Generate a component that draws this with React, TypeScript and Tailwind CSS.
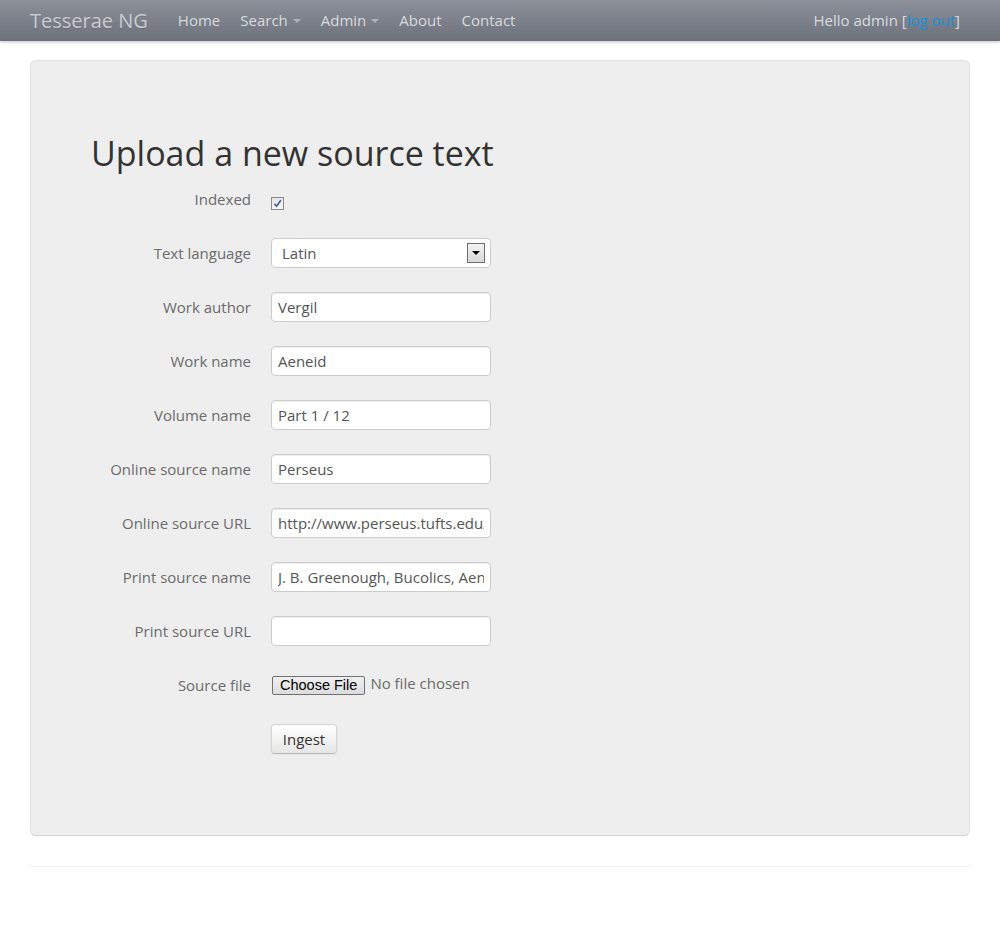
import React from "react";

const rows: { label: string; value?: string }[] = [
  { label: "Work author", value: "Vergil" },
  { label: "Work name", value: "Aeneid" },
  { label: "Volume name", value: "Part 1 / 12" },
  { label: "Online source name", value: "Perseus" },
  { label: "Online source URL", value: "http://www.perseus.tufts.edu/hopper/text?doc=Perseus:text:1999.02.0055" },
  { label: "Print source name", value: "J. B. Greenough, Bucolics, Aeneid, and Georgics of Vergil" },
  { label: "Print source URL", value: "" },
];

function Caret() {
  return <span className="ml-[5px] mt-[1px] inline-block h-0 w-0 border-x-[4px] border-t-[4px] border-x-transparent border-t-[#aeb2b9] align-middle" />;
}

function Label({ children }: { children: React.ReactNode }) {
  return <div className="w-[160px] shrink-0 pt-[5px] text-right text-[15px] leading-[20px] text-[#6b6b6b]">{children}</div>;
}

export default function App() {
  return (
    <div className="min-h-[930px] bg-white" style={{ fontFamily: '"Open Sans", "Noto Sans", sans-serif' }}>
      <div className="flex h-[41px] items-center bg-gradient-to-b from-[#8b9099] to-[#6c717b] px-[30px] shadow-[0_1px_3px_rgba(0,0,0,0.25)]">
        <div className="text-[20px] leading-[20px] text-[#c9ccd1] [text-shadow:0_1px_0_rgba(0,0,0,0.15)]">Tesserae NG</div>
        <div className="ml-[30px] flex items-center gap-[20px] text-[15px] text-[#d9dbde]">
          <span>Home</span>
          <span className="flex items-center">Search<Caret /></span>
          <span className="flex items-center">Admin<Caret /></span>
          <span>About</span>
          <span>Contact</span>
        </div>
        <div className="ml-auto pr-[10px] text-[15px] text-[#d9dbde]">
          Hello admin [<span className="text-[#1a8fd8]">log out</span>]
        </div>
      </div>

      <div className="px-[30px] pt-[19px]">
        <div className="h-[776px] rounded-[6px] border border-[#e0e0e0] border-b-[#d0d0d0] bg-[#eeeeee] px-[60px] pt-[59px]">
          <div className="h-[64px] pt-[14px]">
            <h1 className="text-[34px] leading-[38px] text-[#333]">Upload a new source text</h1>
          </div>

          <div className="flex h-[54px]">
            <Label>Indexed</Label>
            <div className="ml-[20px] pt-[13px]">
              <div className="flex h-[13px] w-[13px] items-center justify-center border border-[#8b8b8b] bg-gradient-to-b from-[#e6e6e6] to-[#f7f7f7]">
                <svg width="9" height="9" viewBox="0 0 9 9">
                  <path d="M1.5 4.8 L3.6 7.2 L7.8 1.2" fill="none" stroke="#3a5baa" strokeWidth="1.6" />
                </svg>
              </div>
            </div>
          </div>

          <div className="flex h-[54px]">
            <Label>Text language</Label>
            <div className="ml-[20px] flex h-[30px] w-[220px] items-center rounded-[4px] border border-[#cccccc] bg-white pl-[10px] pr-[5px] text-[15px] text-[#555]">
              <span>Latin</span>
              <div className="ml-auto flex h-[20px] w-[18px] items-center justify-center border border-[#6f6f6f] bg-gradient-to-b from-[#f4f4f4] to-[#d8d8d8]">
                <span className="inline-block h-0 w-0 border-x-[4px] border-t-[4px] border-x-transparent border-t-black" />
              </div>
            </div>
          </div>

          {rows.map((r) => (
            <div key={r.label} className="flex h-[54px]">
              <Label>{r.label}</Label>
              <input
                readOnly
                value={r.value}
                className="ml-[20px] h-[30px] w-[220px] rounded-[4px] border border-[#cccccc] bg-white px-[6px] text-[15px] text-[#555] shadow-[inset_0_1px_1px_rgba(0,0,0,0.075)] outline-none"
                style={{ fontFamily: '"Open Sans", "Noto Sans", sans-serif' }}
              />
            </div>
          ))}

          <div className="flex h-[54px]">
            <Label>Source file</Label>
            <div className="ml-[21px] flex items-start pt-[6px]">
              <div className="flex h-[19px] items-center rounded-[2px] border border-[#707070] bg-gradient-to-b from-[#f0f0f0] to-[#dcdcdc] px-[7px] text-[14.5px] text-black" style={{ fontFamily: '"Liberation Sans", Arial, sans-serif' }}>
                Choose File
              </div>
              <span className="ml-[5px] -mt-[3px] text-[15px] leading-[20px] text-[#6b6b6b]">No file chosen</span>
            </div>
          </div>

          <div className="flex">
            <div className="w-[160px] shrink-0" />
            <div className="ml-[20px] flex h-[30px] w-[66px] items-center justify-center rounded-[4px] border border-[#d4d4d4] border-b-[#b8b8b8] bg-gradient-to-b from-white to-[#e6e6e6] text-[15px] text-[#333] shadow-[0_1px_2px_rgba(0,0,0,0.05)]">
              Ingest
            </div>
          </div>
        </div>

        <div className="mt-[30px] border-t border-[#eeeeee]" />
      </div>
    </div>
  );
}
